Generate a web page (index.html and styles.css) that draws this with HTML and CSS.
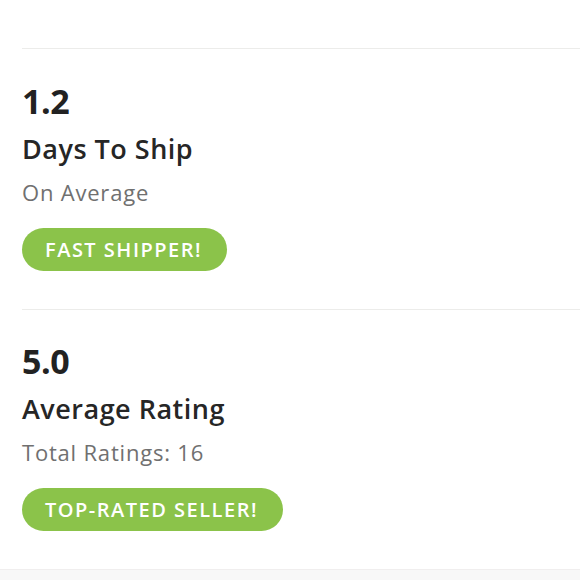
FILE: index.html
```html
<!DOCTYPE html>
<html>
<head>
<meta charset="utf-8">
<link rel="stylesheet" href="styles.css">
</head>
<body>
<div class="page">
  <div class="divider"></div>
  <section class="stat">
    <div class="value">1.2</div>
    <div class="title">Days To Ship</div>
    <div class="sub">On Average</div>
    <div class="badge">FAST SHIPPER!</div>
  </section>
  <div class="divider"></div>
  <section class="stat">
    <div class="value">5.0</div>
    <div class="title">Average Rating</div>
    <div class="sub">Total Ratings: 16</div>
    <div class="badge">TOP-RATED SELLER!</div>
  </section>
  <div class="footer"></div>
</div>
</body>
</html>
```
FILE: styles.css
```css
html, body {
  margin: 0;
  padding: 0;
  background: #ffffff;
}
body {
  font-family: "Open Sans", Lato, sans-serif;
  color: #222222;
}
.page {
  display: flex;
  flex-direction: column;
  width: 580px;
  height: 580px;
  overflow: hidden;
  padding-top: 48px;
  box-sizing: border-box;
}
.divider {
  height: 1px;
  background: #ececea;
  margin-left: 22px;
}
.stat {
  display: flex;
  flex-direction: column;
  align-items: flex-start;
  padding: 30px 22px 38px;
}
.value {
  font-size: 34px;
  font-weight: 700;
  line-height: 44px;
  letter-spacing: -0.5px;
  color: #222222;
}
.title {
  font-size: 27px;
  font-weight: 600;
  letter-spacing: 0.5px;
  line-height: 34px;
  margin-top: 9px;
  color: #262626;
}
.sub {
  font-size: 22px;
  font-weight: 400;
  letter-spacing: 0.8px;
  line-height: 30px;
  margin-top: 11px;
  color: #707070;
}
.badge {
  margin-top: 21px;
  background: #8bc34a;
  color: #ffffff;
  font-size: 20px;
  font-weight: 600;
  letter-spacing: 1.5px;
  line-height: 43px;
  height: 43px;
  padding: 0 25px 0 23px;
  border-radius: 22px;
}
.footer {
  margin-top: auto;
  height: 14px;
  background: #f8f8f8;
  border-top: 1px solid #f0eeee;
}
```
